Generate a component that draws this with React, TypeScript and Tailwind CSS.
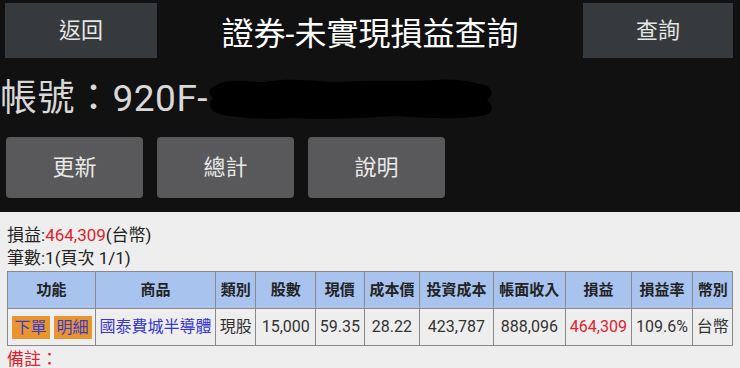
import React from 'react';

const cols = [
  { label: '功能', w: 'w-[90px]' },
  { label: '商品', w: 'w-[120px]' },
  { label: '類別', w: 'w-[41px]' },
  { label: '股數', w: 'w-[60px]' },
  { label: '現價', w: 'w-[49px]' },
  { label: '成本價', w: 'w-[56px]' },
  { label: '投資成本', w: 'w-[74px]' },
  { label: '帳面收入', w: 'w-[73px]' },
  { label: '損益', w: 'w-[66px]' },
  { label: '損益率', w: 'w-[62px]' },
  { label: '幣別', w: 'w-[40px]' },
];

const font = { fontFamily: 'Roboto, "Noto Sans CJK TC", sans-serif' };

// redaction scribble over the account number
const Scribble = () => (
  <svg width="290" height="44" viewBox="0 0 290 44" className="-ml-[3px]">
    <path
      d="M10 10 C20 2 40 6 60 6 C80 2 100 4 130 6 C170 4 200 6 230 4 C250 2 270 6 282 10 C290 16 286 20 282 24 C290 30 288 38 276 40 C250 44 220 42 190 40 C160 42 120 44 90 42 C60 44 30 42 14 38 C2 34 4 26 8 22 C2 16 4 12 10 10 Z"
      fill="#000"
    />
  </svg>
);

export default function App() {
  return (
    <div className="w-[740px] h-[368px] overflow-hidden bg-[#eeeeee]" style={font}>
      <div className="bg-[#111111] h-[212px] flex flex-col">
        <div className="flex items-start pt-[3px] pl-[5px] pr-[7px]">
          <button className="w-[152px] h-[55px] bg-[#363a3c] text-[#e6e6e6] text-[22px]">返回</button>
          <div className="flex-1 text-center text-white text-[32px] leading-[62px]">證券-未實現損益查詢</div>
          <button className="w-[150px] h-[55px] bg-[#363a3c] text-[#e6e6e6] text-[22px]">查詢</button>
        </div>
        <div className="flex items-center h-[78px] -mt-[6px]">
          <span className="text-[#d8d8d8] text-[37px] leading-none tracking-[0.5px]">帳號：920F-</span>
          <Scribble />
        </div>
        <div className="flex gap-[14px] px-[6px]">
          {['更新', '總計', '說明'].map((t) => (
            <button key={t} className="w-[137px] h-[61px] bg-[#59595b] rounded-[4px] text-[#e8e8e8] text-[22px]">
              {t}
            </button>
          ))}
        </div>
      </div>
      <div className="px-[7px] pt-[11px] text-[#222] text-[17px] leading-[24px]">
        <div>
          損益:<span className="text-[#e0222c]">464,309</span>(台幣)
        </div>
        <div className="-mt-[1px]">筆數:1(頁次 1/1)</div>
        <table className="border-collapse mt-[1px] table-fixed">
          <thead>
            <tr className="bg-[#a7c3ee] h-[37px]">
              {cols.map((c) => (
                <th key={c.label} className={`${c.w} border border-[#8a8a8a] text-[15px] font-bold text-[#222] p-0 whitespace-nowrap`}>
                  {c.label}
                </th>
              ))}
            </tr>
          </thead>
          <tbody>
            <tr className="h-[37px] bg-[#eeeeee] text-[16px] text-[#333] text-center">
              <td className="border border-[#8a8a8a] p-0">
                <div className="flex justify-center gap-[4px]">
                  <span className="bg-[#e8952f] text-[#3a3ac8] text-[16px] leading-[23px] px-[3px]">下單</span>
                  <span className="bg-[#e8952f] text-[#3a3ac8] text-[16px] leading-[23px] px-[3px]">明細</span>
                </div>
              </td>
              <td className="border border-[#8a8a8a] p-0 text-[#3535d0] whitespace-nowrap">國泰費城半導體</td>
              <td className="border border-[#8a8a8a] p-0">現股</td>
              <td className="border border-[#8a8a8a] p-0">15,000</td>
              <td className="border border-[#8a8a8a] p-0">59.35</td>
              <td className="border border-[#8a8a8a] p-0">28.22</td>
              <td className="border border-[#8a8a8a] p-0">423,787</td>
              <td className="border border-[#8a8a8a] p-0">888,096</td>
              <td className="border border-[#8a8a8a] p-0 text-[#e0222c]">464,309</td>
              <td className="border border-[#8a8a8a] p-0">109.6%</td>
              <td className="border border-[#8a8a8a] p-0">台幣</td>
            </tr>
          </tbody>
        </table>
        <div className="text-[#e0222c] mt-[1px]">備註：</div>
      </div>
    </div>
  );
}
